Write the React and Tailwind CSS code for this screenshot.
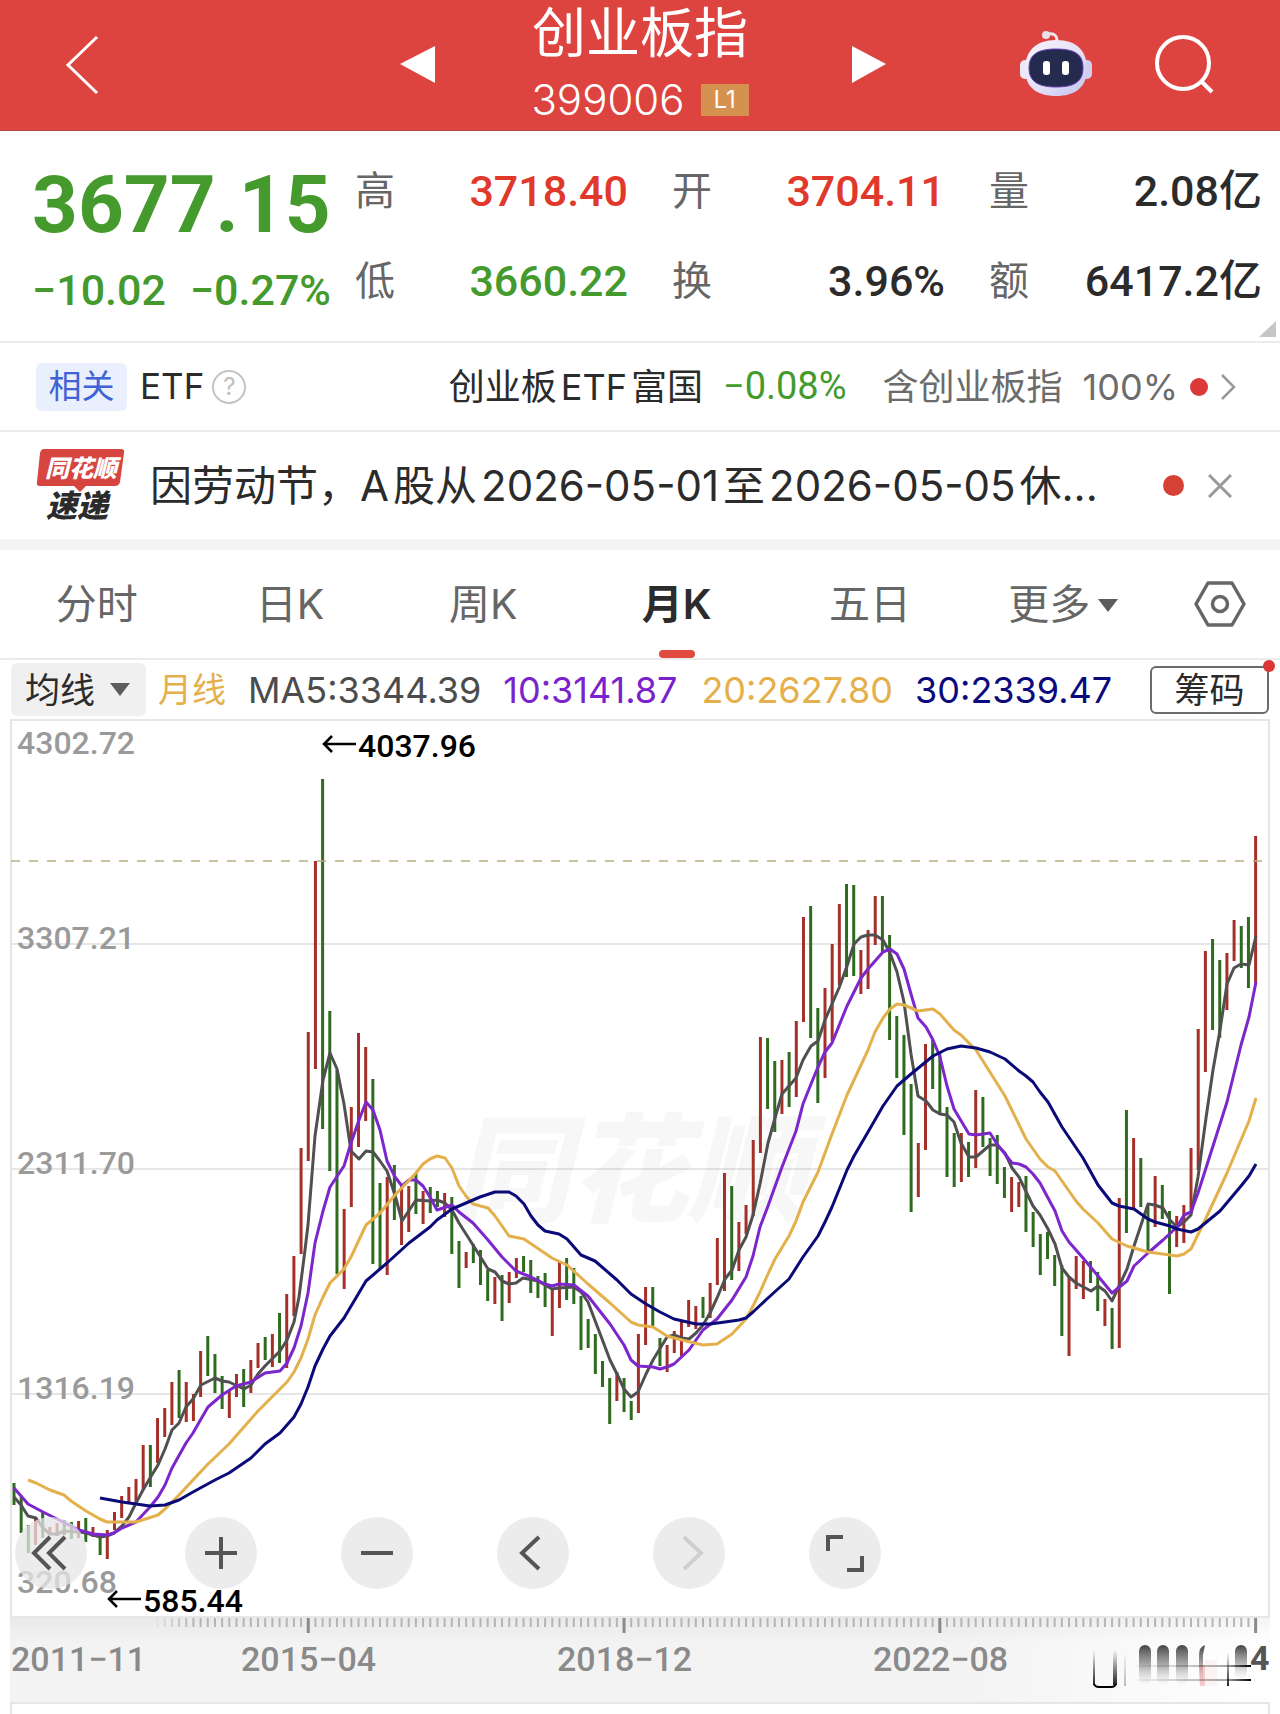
import React, { useState } from 'react';

// [haut, bas, couleur] pour chaque mois, de 2011-11 à 2026-04
const candles = [
  [1483, 1505, 'g'], [1497, 1533, 'g'], [1525, 1553, 'g'], [1519, 1545, 'r'], [1512, 1538, 'g'], [1527, 1535, 'r'],
  [1523, 1536, 'r'], [1520, 1535, 'g'], [1522, 1539, 'g'], [1521, 1538, 'r'], [1518, 1542, 'g'], [1527, 1537, 'r'],
  [1533, 1555, 'g'], [1530, 1559, 'r'], [1512, 1530, 'r'], [1496, 1518, 'r'], [1487, 1504, 'r'], [1479, 1504, 'r'],
  [1445, 1490, 'r'], [1445, 1487, 'g'], [1418, 1463, 'r'], [1408, 1437, 'r'], [1382, 1425, 'r'], [1370, 1418, 'g'],
  [1382, 1422, 'r'], [1394, 1421, 'r'], [1351, 1397, 'r'], [1336, 1376, 'g'], [1354, 1393, 'g'], [1376, 1409, 'g'],
  [1390, 1418, 'r'], [1374, 1397, 'r'], [1369, 1407, 'g'], [1360, 1393, 'r'], [1343, 1368, 'r'], [1337, 1360, 'g'],
  [1334, 1367, 'r'], [1313, 1363, 'g'], [1294, 1368, 'r'], [1256, 1316, 'r'], [1148, 1254, 'r'], [1032, 1161, 'r'],
  [861, 1069, 'r'], [779, 1129, 'g'], [1011, 1171, 'g'], [1070, 1274, 'g'], [1209, 1289, 'r'], [1107, 1207, 'r'],
  [1033, 1147, 'r'], [1047, 1121, 'r'], [1079, 1264, 'g'], [1183, 1269, 'g'], [1177, 1275, 'r'], [1165, 1220, 'g'],
  [1185, 1245, 'r'], [1186, 1232, 'r'], [1173, 1214, 'g'], [1191, 1224, 'r'], [1187, 1213, 'g'], [1191, 1207, 'g'],
  [1193, 1217, 'r'], [1197, 1254, 'g'], [1241, 1288, 'g'], [1252, 1268, 'r'], [1244, 1263, 'g'], [1250, 1285, 'g'],
  [1270, 1301, 'g'], [1277, 1304, 'r'], [1275, 1321, 'g'], [1272, 1303, 'r'], [1258, 1278, 'r'], [1256, 1272, 'g'],
  [1260, 1293, 'g'], [1276, 1298, 'g'], [1273, 1307, 'g'], [1288, 1336, 'r'], [1261, 1308, 'r'], [1258, 1300, 'g'],
  [1268, 1304, 'g'], [1296, 1350, 'g'], [1319, 1348, 'g'], [1334, 1374, 'g'], [1361, 1387, 'g'], [1378, 1424, 'g'],
  [1372, 1401, 'r'], [1378, 1412, 'g'], [1401, 1420, 'g'], [1334, 1413, 'r'], [1287, 1345, 'r'], [1287, 1327, 'g'],
  [1338, 1366, 'g'], [1345, 1372, 'r'], [1331, 1353, 'r'], [1321, 1356, 'r'], [1300, 1327, 'r'], [1306, 1329, 'r'],
  [1297, 1318, 'g'], [1283, 1318, 'r'], [1238, 1285, 'r'], [1173, 1291, 'r'], [1186, 1280, 'g'], [1222, 1271, 'r'],
  [1205, 1234, 'r'], [1140, 1216, 'r'], [1037, 1153, 'r'], [1038, 1109, 'g'], [1061, 1132, 'g'], [1060, 1114, 'r'],
  [1052, 1107, 'g'], [1021, 1097, 'r'], [917, 1022, 'r'], [906, 1038, 'g'], [1008, 1103, 'g'], [988, 1078, 'r'],
  [944, 1041, 'r'], [904, 985, 'r'], [884, 977, 'g'], [885, 976, 'g'], [950, 994, 'r'], [930, 989, 'r'],
  [896, 945, 'r'], [896, 952, 'g'], [935, 1040, 'g'], [1016, 1078, 'g'], [1035, 1135, 'g'], [1084, 1212, 'g'],
  [1143, 1197, 'r'], [1044, 1150, 'r'], [1040, 1089, 'g'], [1052, 1115, 'g'], [1107, 1177, 'g'], [1133, 1187, 'g'],
  [1133, 1182, 'r'], [1142, 1177, 'g'], [1090, 1168, 'r'], [1097, 1147, 'g'], [1138, 1176, 'g'], [1135, 1184, 'g'],
  [1167, 1198, 'g'], [1177, 1212, 'r'], [1182, 1207, 'r'], [1176, 1232, 'g'], [1212, 1247, 'g'], [1234, 1275, 'g'],
  [1232, 1259, 'g'], [1255, 1286, 'g'], [1265, 1336, 'g'], [1277, 1356, 'r'], [1256, 1289, 'r'], [1261, 1299, 'r'],
  [1261, 1283, 'g'], [1272, 1311, 'g'], [1299, 1326, 'r'], [1308, 1349, 'g'], [1198, 1348, 'r'], [1110, 1233, 'g'],
  [1138, 1209, 'r'], [1158, 1207, 'g'], [1206, 1251, 'g'], [1176, 1227, 'r'], [1185, 1219, 'g'], [1211, 1294, 'g'],
  [1216, 1247, 'r'], [1205, 1243, 'r'], [1148, 1212, 'r'], [1029, 1170, 'r'], [951, 1072, 'r'], [939, 1030, 'g'],
  [960, 1038, 'g'], [953, 1010, 'r'], [920, 961, 'r'], [926, 968, 'g'], [917, 988, 'g'], [836, 983, 'r'],
];

const ma5 =
  '14,1497 21,1505 28,1516 36,1518 43,1528 50,1534 57,1534 64,1531 79,1532 86,1533 100,1537 107,1536 114,1533 122,1526 129,1517 136,1503 143,1490 150,1478 158,1465 165,1449 172,1430 179,1423 186,1407 193,1399 201,1385 215,1378 222,1381 229,1382 244,1389 251,1385 258,1374 265,1366 280,1351 287,1340 294,1322 299,1297 305,1250 308,1225 315,1136 323,1080 330,1053 337,1069 344,1104 351,1151 359,1159 366,1151 373,1152 380,1161 387,1171 395,1195 402,1221 416,1200 430,1201 437,1200 445,1203 452,1210 459,1223 473,1245 488,1269 495,1272 502,1281 509,1284 516,1283 523,1278 538,1281 545,1285 552,1289 559,1288 574,1287 581,1292 588,1302 610,1360 617,1374 624,1389 631,1397 638,1392 646,1374 653,1360 667,1337 674,1335 682,1338 689,1339 696,1333 703,1325 710,1313 717,1298 725,1279 732,1270 739,1250 746,1237 753,1215 760,1184 768,1143 775,1118 782,1094 796,1078 803,1060 811,1046 818,1041 825,1020 832,1004 839,988 847,966 854,944 861,937 868,935 875,935 883,940 890,953 897,972 904,1002 911,1054 918,1096 926,1101 933,1110 940,1114 947,1115 954,1122 961,1143 969,1157 976,1157 983,1151 990,1145 997,1145 1005,1153 1012,1168 1019,1177 1033,1206 1040,1215 1048,1229 1055,1244 1062,1268 1069,1277 1076,1283 1091,1291 1098,1286 1105,1291 1112,1301 1119,1286 1127,1269 1134,1246 1148,1204 1155,1205 1163,1208 1170,1220 1177,1227 1184,1222 1191,1215 1198,1177 1206,1118 1213,1070 1220,1030 1227,984 1234,968 1241,964 1249,965 1256,936';
const ma10 =
  '14,1488 28,1504 43,1512 57,1519 79,1530 93,1534 107,1535 114,1533 122,1528 136,1522 150,1507 158,1497 165,1485 172,1468 186,1443 193,1433 201,1419 208,1407 222,1395 236,1386 251,1382 265,1373 280,1371 287,1363 294,1348 301,1326 308,1293 315,1243 323,1211 330,1187 344,1166 351,1143 359,1120 366,1102 373,1110 380,1130 387,1161 395,1177 402,1186 409,1180 416,1180 423,1186 430,1197 437,1210 452,1205 459,1212 473,1223 488,1240 502,1257 516,1271 531,1277 545,1284 552,1286 559,1284 574,1285 588,1296 610,1324 624,1345 631,1360 638,1366 653,1367 660,1369 667,1367 674,1364 689,1350 703,1330 717,1319 732,1300 746,1277 753,1256 760,1227 768,1206 782,1167 796,1131 803,1104 811,1084 818,1067 825,1052 832,1043 847,1006 861,978 868,969 883,952 890,949 897,954 904,969 911,994 918,1018 926,1027 933,1040 940,1057 947,1086 954,1109 969,1134 976,1135 990,1133 997,1144 1005,1154 1012,1163 1019,1164 1026,1167 1033,1174 1040,1183 1055,1211 1062,1231 1069,1242 1083,1258 1098,1276 1112,1293 1127,1281 1134,1266 1148,1253 1163,1240 1177,1227 1184,1215 1191,1212 1198,1193 1213,1146 1227,1102 1241,1045 1249,1017 1256,982';
const ma20 =
  '28,1480 36,1483 50,1490 64,1495 71,1501 86,1511 100,1519 107,1522 136,1522 158,1515 165,1509 179,1495 193,1480 208,1464 229,1444 258,1411 287,1382 294,1372 301,1358 308,1339 315,1315 323,1297 330,1283 344,1269 351,1257 366,1225 380,1213 395,1195 416,1173 423,1164 430,1159 437,1156 445,1158 452,1168 459,1186 466,1196 473,1204 488,1208 495,1216 509,1236 524,1239 552,1258 567,1265 588,1284 610,1303 631,1322 638,1325 653,1327 667,1336 682,1340 703,1345 717,1344 732,1334 746,1319 753,1306 760,1292 768,1274 775,1259 789,1236 796,1221 803,1202 818,1172 832,1134 847,1095 868,1050 875,1032 883,1018 890,1009 897,1004 904,1005 918,1011 933,1009 940,1014 954,1030 961,1035 976,1050 1005,1096 1026,1139 1040,1159 1048,1167 1055,1171 1076,1201 1083,1209 1098,1223 1112,1239 1127,1246 1148,1252 1170,1255 1177,1256 1184,1254 1191,1249 1206,1218 1227,1173 1249,1121 1256,1098';
const ma30 =
  '100,1498 122,1502 150,1506 165,1505 179,1500 193,1492 215,1480 229,1473 251,1458 265,1444 280,1433 294,1417 301,1404 308,1387 315,1366 323,1349 330,1336 344,1318 366,1281 387,1263 409,1243 430,1227 437,1220 452,1209 466,1203 480,1197 495,1192 509,1192 516,1196 524,1204 531,1216 538,1225 545,1231 559,1234 567,1239 581,1255 595,1261 617,1280 631,1294 646,1304 660,1312 674,1319 696,1324 710,1324 725,1322 739,1320 746,1318 753,1312 768,1298 789,1279 803,1257 818,1236 825,1222 832,1207 847,1170 854,1156 868,1132 883,1106 897,1086 911,1074 933,1056 947,1049 961,1046 976,1048 990,1052 1005,1059 1019,1071 1026,1076 1033,1082 1040,1092 1048,1102 1062,1127 1083,1158 1098,1185 1112,1203 1119,1206 1134,1209 1148,1219 1155,1222 1170,1226 1177,1229 1191,1232 1198,1229 1220,1211 1241,1186 1249,1176 1256,1164';

const candleX = (i) => 14 + i * 7.177;

const quotes = [
  { label: '高', value: '3718.40', color: 'text-[#e0382b]' },
  { label: '开', value: '3704.11', color: 'text-[#e0382b]' },
  { label: '量', value: '2.08亿', color: 'text-[#2b2b2b]' },
  { label: '低', value: '3660.22', color: 'text-[#449a2c]' },
  { label: '换', value: '3.96%', color: 'text-[#2b2b2b]' },
  { label: '额', value: '6417.2亿', color: 'text-[#2b2b2b]' },
];

const tabs = ['分时', '日K', '周K', '月K', '五日', '更多'];

const Header = () => (
  <header className="grid h-[131px] grid-cols-[1fr_auto_1fr] border-b border-[#b8453f] bg-[#dd4440] text-white">
    <div className="flex items-center justify-between pl-16 pr-24">
      <button type="button" aria-label="返回">
        <svg width="36" height="60" viewBox="0 0 36 60" fill="none" stroke="#fff" strokeWidth="3">
          <path d="M33 2 L4 30 L33 58" />
        </svg>
      </button>
      <button type="button" aria-label="上一个">
        <svg width="35" height="38" viewBox="0 0 35 38" fill="#fff"><path d="M0 18 L35 0 V37 Z" /></svg>
      </button>
    </div>
    <div className="flex flex-col items-center pt-[6px]">
      <h1 className="text-[54px] leading-[56px]">创业板指</h1>
      <div className="mt-[18px] flex items-center gap-4">
        <span className="text-[42px] leading-10 font-light">399006</span>
        <span className="h-8 w-12 bg-[#d5914f] text-center text-2xl leading-8">L1</span>
      </div>
    </div>
    <div className="flex items-center pl-[103px]">
      <button type="button" aria-label="下一个">
        <svg width="34" height="38" viewBox="0 0 34 38" fill="#fff"><path d="M34 18 L0 0 V37 Z" /></svg>
      </button>
      <button type="button" aria-label="智能助手" className="ml-auto">
        <svg width="74" height="70" viewBox="0 0 74 70">
          <defs>
            <linearGradient id="head" x1="0" y1="0" x2="1" y2="1">
              <stop offset="0" stopColor="#f8f3fb" />
              <stop offset="0.55" stopColor="#e4e0f6" />
              <stop offset="1" stopColor="#c3c4f0" />
            </linearGradient>
          </defs>
          <path d="M28 4 C35 3 38 5 38 11" fill="none" stroke="#efe6ee" strokeWidth="3" />
          <circle cx="27" cy="5" r="4" fill="#eadfe8" />
          <rect x="1" y="30" width="11" height="19" rx="5" fill="#ece6f6" />
          <rect x="62" y="30" width="11" height="19" rx="5" fill="#d0cff2" />
          <path d="M37 10 C58 10 68 21 68 39 C68 58 55 66 37 66 C19 66 6 58 6 39 C6 21 17 10 37 10 Z" fill="url(#head)" />
          <path d="M37 19 C57 19 64 25 64 38 C64 52 55 57 37 57 C20 57 10 52 10 38 C10 25 18 19 37 19 Z" fill="#252a4f" stroke="#6a41b8" />
          <rect x="24" y="31" width="7" height="14" rx="3" fill="#fff" />
          <rect x="43" y="31" width="7" height="14" rx="3" fill="#fff" />
        </svg>
      </button>
      <button type="button" aria-label="搜索" className="mr-[65px] ml-[60px]">
        <svg width="62" height="62" viewBox="0 0 62 62" fill="none" stroke="#fff" strokeWidth="4">
          <circle cx="30" cy="29" r="26" />
          <path d="M48 47 L59 58" />
        </svg>
      </button>
    </div>
  </header>
);

const Quote = () => (
  <section className="relative flex h-[212px] border-b-2 border-[#ebebeb] pr-[18px] pl-8">
    <div className="w-[323px] shrink-0 pt-[30px] font-['Roboto'] text-[#449a2c]">
      <div className="text-[80px] leading-[88px] font-bold">3677.15</div>
      <div className="mt-4 flex gap-6 text-[43px] leading-[50px] font-medium">
        <span>−10.02</span>
        <span>−0.27%</span>
      </div>
    </div>
    <dl className="grid flex-1 grid-cols-3 content-start gap-x-11 gap-y-[38px] pt-[34px]">
      {quotes.map((q) => (
        <div key={q.label} className="flex items-center justify-between">
          <dt className="text-[40px] leading-[52px] text-[#666]">{q.label}</dt>
          <dd className={`font-['Roboto','Noto_Sans_CJK_SC',sans-serif] text-[43px] leading-[52px] font-medium ${q.color}`}>
            {q.value}
          </dd>
        </div>
      ))}
    </dl>
    <svg className="absolute right-1 bottom-1" width="17" height="16" viewBox="0 0 17 16">
      <path d="M17 0 V16 H0 Z" fill="#c6c6c6" />
    </svg>
  </section>
);

const EtfRow = () => (
  <section className="flex h-[89px] items-center border-b-2 border-[#ebebeb] pr-[44px] pl-9 text-[35px] whitespace-nowrap text-[#2b2b2b]">
    <span className="h-12 w-[91px] rounded-md bg-[#e9effc] text-center text-[33px] leading-[46px] text-[#3f62d4]">相关</span>
    <span className="ml-[13px]">ETF</span>
    <button type="button" aria-label="说明" className="ml-2 size-[34px] rounded-full border-2 border-[#c4c4c4] text-2xl leading-[30px] text-[#c0c0c0]">
      ?
    </button>
    <a href="#etf" className="ml-auto flex items-center">
      <span className="text-[36px]">
        创业板<span className="mx-1">ETF</span>富国
      </span>
      <span className="ml-5 font-['Roboto'] text-[38px] text-[#449a2c]">−0.08%</span>
      <span className="ml-9 text-[36px] text-[#6c6c6c]">含创业板指</span>
      <span className="ml-5 text-[36px] text-[#6c6c6c]">100%</span>
      <span className="ml-3 size-[18px] rounded-full bg-[#dc3a3a]" />
      <svg className="ml-3" width="16" height="28" viewBox="0 0 16 28" fill="none" stroke="#999" strokeWidth="2.5">
        <path d="M2 2 L14 14 L2 26" />
      </svg>
    </a>
  </section>
);

const Notice = () => (
  <section className="flex h-[107px] items-center pr-12 pl-9">
    <svg width="92" height="78" viewBox="0 0 92 78" className="shrink-0 overflow-visible font-['Noto_Sans_CJK_SC',sans-serif]">
      <path d="M8 2 H85 Q89 2 88 6 L84 35 Q83 39 79 39 H50 L44 45 L38 39 H4 Q0 39 1 35 L4 6 Q5 2 8 2 Z" fill="#d64540" />
      <text x="9" y="30" fontSize="24" fontWeight="900" fontStyle="italic" fill="#fff">同花顺</text>
      <text x="10" y="70" fontSize="31" fontWeight="900" fontStyle="italic" fill="#2b2b2b">速递</text>
    </svg>
    <a href="#notice" className="ml-[22px] flex-1 truncate text-[42px] text-[#2b2b2b]">
      因劳动节，<span className="mr-1">A</span>股从<span className="mx-1">2026-05-01</span>至<span className="mx-1">2026-05-05</span>休...
    </a>
    <span className="size-[21px] shrink-0 rounded-full bg-[#d64035]" />
    <button type="button" aria-label="关闭" className="ml-6">
      <svg width="24" height="24" viewBox="0 0 24 24" fill="none" stroke="#999" strokeWidth="3">
        <path d="M1 1 L23 23 M23 1 L1 23" />
      </svg>
    </button>
  </section>
);

const Tabs = ({ active, onChange }) => (
  <nav className="flex h-[110px] border-b-2 border-[#ebebeb] text-[41px] text-[#666]">
    {tabs.map((tab) => (
      <button
        key={tab}
        type="button"
        onClick={() => onChange(tab)}
        className={`relative flex flex-1 items-center justify-center gap-2 pt-[2px] ${active === tab ? 'font-semibold text-[#2b2b2b]' : ''}`}
      >
        {tab}
        {tab === '更多' && (
          <svg width="20" height="13" viewBox="0 0 20 13" fill="#5c5c5c"><path d="M0 0 H20 L10 13 Z" /></svg>
        )}
        {active === tab && <span className="absolute bottom-0 h-2 w-9 rounded-sm bg-[#e14b3f]" />}
      </button>
    ))}
    <button type="button" aria-label="设置" className="flex w-[120px] items-center justify-center">
      <svg width="52" height="48" viewBox="0 0 52 48" fill="none" stroke="#666" strokeWidth="3.5" strokeLinejoin="round">
        <path d="M14 3 H38 L50 24 L38 45 H14 L2 24 Z" />
        <circle cx="26" cy="24" r="7.5" />
      </svg>
    </button>
  </nav>
);

const Indicators = () => (
  <div className="flex h-[59px] items-center pr-[11px] pl-[11px] text-[36px] whitespace-nowrap">
    <div className="relative text-[35px]">
      <select aria-label="指标" className="block h-[53px] w-[135px] appearance-none rounded-md bg-[#f0f0f0] pl-[14px] leading-[50px] text-[#2b2b2b]">
        <option>均线</option>
      </select>
      <svg className="pointer-events-none absolute top-5 right-4" width="20" height="13" viewBox="0 0 20 13" fill="#5c5c5c">
        <path d="M0 0 H20 L10 13 Z" />
      </svg>
    </div>
    <span className="ml-3 text-[34px] text-[#e5b04c]">月线</span>
    <span className="ml-[22px] text-[#4c4c4c]">MA5:3344.39</span>
    <span className="ml-[22px] text-[#7a22cc]">10:3141.87</span>
    <span className="ml-6 text-[#e5b04c]">20:2627.80</span>
    <span className="ml-[22px] text-[#0a0a7c]">30:2339.47</span>
    <button type="button" className="relative ml-auto h-12 w-[119px] rounded-md border-2 border-[#6b6b6b] text-[35px] leading-[42px] text-[#2b2b2b]">
      筹码
      <span className="absolute -top-2 -right-2 size-3 rounded-full bg-[#dc3535]" />
    </button>
  </div>
);

const gridLines = [944, 1169, 1394];
const priceLabels = [
  ['4302.72', 754], ['3307.21', 949], ['2311.70', 1174], ['1316.19', 1399], ['320.68', 1593],
];

const Chart = () => (
  <svg viewBox="10 719 1260 899" className="block w-full overflow-visible font-['Roboto']" role="img" aria-label="月K线图">
    {gridLines.map((y) => (
      <line key={y} x1="11" x2="1269" y1={y} y2={y} stroke="#e6e6e6" strokeWidth="2" />
    ))}
    <text x="452" y="1213" fontSize="118" fontWeight="900" fontStyle="italic" fill="#000" fillOpacity="0.03" className="font-['Noto_Sans_CJK_SC',sans-serif]">
      同花顺
    </text>
    <rect x="11" y="720" width="1258" height="897" fill="none" stroke="#e6e6e6" strokeWidth="2" />
    {priceLabels.map(([label, y]) => (
      <text key={label} x="17" y={y} fontSize="32" fontWeight="500" fill="#9a9a9a">{label}</text>
    ))}
    {candles.map(([top, bottom, c], i) => (
      <line key={i} x1={candleX(i)} x2={candleX(i)} y1={top} y2={bottom} stroke={c === 'g' ? '#2f6b1f' : '#a5302a'} strokeWidth="3" />
    ))}
    <line x1="11" x2="1269" y1="861" y2="861" stroke="#b9af7c" strokeWidth="1.5" strokeDasharray="9 9" />
    <g fill="none" strokeWidth="3" strokeLinejoin="round">
      <polyline points={ma5} stroke="#505050" />
      <polyline points={ma10} stroke="#7c26cc" />
      <polyline points={ma20} stroke="#e3b04b" />
      <polyline points={ma30} stroke="#0a0a78" />
    </g>
    <g fill="none" stroke="#000" strokeWidth="2.5">
      <path d="M356 744 H324 M332 736 L324 744 L332 752" />
      <path d="M141 1599 H109 M117 1591 L109 1599 L117 1607" />
    </g>
    <g fontSize="32" fontWeight="500">
      <text x="358" y="757">4037.96</text>
      <text x="143" y="1612">585.44</text>
    </g>
  </svg>
);

const tools = [
  { name: '最左', path: 'M35 20 L19 36 L35 52 M50 20 L34 36 L50 52', circle: 'mr-[14px]' },
  { name: '放大', path: 'M20 36 H52 M36 20 V52', circle: '' },
  { name: '缩小', path: 'M20 36 H52', circle: '' },
  { name: '左移', path: 'M42 20 L25 36 L42 52', circle: '' },
  { name: '右移', path: 'M31 20 L48 36 L31 52', circle: '', disabled: true },
  { name: '全屏', path: 'M19 34 V20 H34 M38 53 H53 V39', circle: '' },
];

const ChartTools = () => (
  <div className="absolute bottom-[29px] left-[5px] flex gap-[84px]">
    {tools.map((t) => (
      <button key={t.name} type="button" aria-label={t.name} disabled={t.disabled} className={`size-[72px] rounded-full bg-[#e6e6e6]/75 ${t.circle}`}>
        <svg width="72" height="72" viewBox="0 0 72 72" fill="none" stroke={t.disabled ? '#cfcfcf' : '#555'} strokeWidth="4">
          <path d={t.path} />
        </svg>
      </button>
    ))}
  </div>
);

const Axis = () => (
  <svg viewBox="10 1618 1260 96" className="block w-full font-['Roboto']">
    <defs>
      <linearGradient id="fade" x1="0" x2="1">
        <stop offset="0" stopColor="#f3f3f3" />
        <stop offset="0.75" stopColor="#f3f3f3" />
        <stop offset="1" stopColor="#fff" />
      </linearGradient>
      <linearGradient id="shade" x1="0" x2="0" y1="0" y2="1">
        <stop offset="0" stopColor="#000" stopOpacity="0.04" />
        <stop offset="1" stopColor="#000" stopOpacity="0" />
      </linearGradient>
      <linearGradient id="smear" x1="0" x2="0" y1="0" y2="1">
        <stop offset="0" stopColor="#444" />
        <stop offset="0.5" stopColor="#888" stopOpacity="0.7" />
        <stop offset="1" stopColor="#ddd" stopOpacity="0.1" />
      </linearGradient>
      <linearGradient id="rise" x1="0" x2="0" y1="0" y2="1">
        <stop offset="0" stopColor="#222" stopOpacity="0" />
        <stop offset="1" stopColor="#222" />
      </linearGradient>
      <linearGradient id="streak" x1="0" x2="1">
        <stop offset="0" stopColor="#000" stopOpacity="0" />
        <stop offset="0.8" stopColor="#000" stopOpacity="0.35" />
        <stop offset="1" stopColor="#000" />
      </linearGradient>
    </defs>
    <rect x="10" y="1618" width="1260" height="84" fill="url(#fade)" />
    <rect x="10" y="1618" width="1260" height="26" fill="url(#shade)" />
    {candles.map((c, i) => {
      if (i < 20) return null;
      const major = i === 41 || i === 85 || i === 129 || i === 173;
      return (
        <line
          key={i}
          x1={candleX(i)}
          x2={candleX(i)}
          y1="1618"
          y2={major ? 1633 : 1627}
          stroke={major ? '#8a8a8a' : '#b4b4b4'}
          strokeWidth={major ? 3 : 2}
          opacity={Math.min(1, (i - 19) / 6)}
        />
      );
    })}
    <g fontSize="34" fontWeight="500" fill="#8a8a8a">
      <text x="11" y="1671">2011−11</text>
      <text x="241" y="1671">2015−04</text>
      <text x="557" y="1671">2018−12</text>
      <text x="873" y="1671">2022−08</text>
    </g>
    <rect x="1093" y="1650" width="2" height="35" fill="url(#rise)" />
    <rect x="1113" y="1650" width="4" height="35" fill="url(#rise)" />
    <path d="M1094 1684 Q1095 1687 1099 1687 H1111 Q1115 1687 1116 1684" fill="none" stroke="#000" strokeWidth="2" />
    <rect x="1124" y="1652" width="2" height="34" fill="url(#rise)" opacity="0.3" />
    <rect x="1139" y="1645" width="12" height="40" rx="6" fill="url(#smear)" />
    <rect x="1157" y="1645" width="12" height="40" rx="6" fill="url(#smear)" />
    <rect x="1176" y="1645" width="12" height="40" rx="6" fill="url(#smear)" />
    <path d="M1205 1645 Q1199 1647 1199 1655 V1686 H1203 V1655 Z" fill="url(#smear)" />
    <rect x="1200" y="1665" width="5" height="21" fill="#e88" opacity="0.4" />
    <rect x="1205" y="1660" width="12" height="26" fill="#e88" opacity="0.08" />
    <rect x="1227" y="1652" width="2" height="34" fill="url(#rise)" />
    <rect x="1235" y="1645" width="12" height="34" rx="6" fill="url(#smear)" />
    <rect x="1130" y="1665" width="121" height="2" fill="url(#streak)" />
    <rect x="1130" y="1679" width="121" height="2" fill="url(#streak)" />
    <text x="1250" y="1670" fontSize="34" fontWeight="700" fill="#555">4</text>
    <path d="M11 1714 V1703 H1269 V1714" fill="none" stroke="#e6e6e6" strokeWidth="2" />
  </svg>
);

const App = () => {
  const [activeTab, setActiveTab] = useState('月K');

  return (
    <div className="bg-white font-['Inter','Noto_Sans_CJK_SC',sans-serif]">
      <Header />
      <Quote />
      <EtfRow />
      <Notice />
      <div className="h-[11px] bg-[#f3f3f3]" />
      <Tabs active={activeTab} onChange={setActiveTab} />
      <Indicators />
      <main className="mx-[10px]">
        <div className="relative">
          <Chart />
          <ChartTools />
        </div>
        <Axis />
      </main>
    </div>
  );
};

export default App;
